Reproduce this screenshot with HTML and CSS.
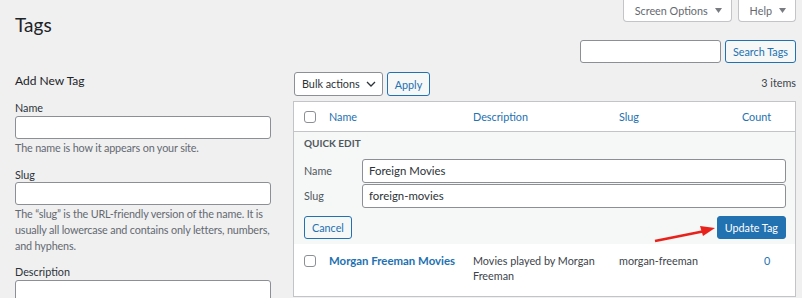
FILE: index.html
```html
<!DOCTYPE html>
<html lang="en">
<head>
    <meta charset="UTF-8">
    <title>Tags</title>
    <link rel="stylesheet" href="styles.css">
</head>
<body>
    <div class="top">
        <h1>Tags</h1>
        <div class="top-right">
            <div class="screen-links">
                <button class="meta-btn">Screen Options <svg width="7" height="5" viewBox="0 0 7 5"><path d="M0 0h7L3.5 5z" fill="#787c82"/></svg></button>
                <button class="meta-btn">Help <svg width="7" height="5" viewBox="0 0 7 5"><path d="M0 0h7L3.5 5z" fill="#787c82"/></svg></button>
            </div>
            <div class="search-box">
                <input type="text" class="search-input">
                <button class="btn">Search Tags</button>
            </div>
        </div>
    </div>

    <div class="columns">
        <div class="col-left">
            <h2>Add New Tag</h2>
            <div class="form-field">
                <label>Name</label>
                <input type="text" class="field">
                <p class="hint">The name is how it appears on your site.</p>
            </div>
            <div class="form-field">
                <label>Slug</label>
                <input type="text" class="field">
                <p class="hint">The &ldquo;slug&rdquo; is the URL-friendly version of the name. It is usually all lowercase and contains only letters, numbers, and hyphens.</p>
            </div>
            <div class="form-field">
                <label>Description</label>
                <textarea class="field area"></textarea>
            </div>
        </div>

        <div class="col-right">
            <div class="tablenav">
                <div class="select">Bulk actions <svg width="10" height="6" viewBox="0 0 10 6"><path d="M1 1l4 4 4-4" fill="none" stroke="#2c3338" stroke-width="1.3"/></svg></div>
                <button class="btn">Apply</button>
                <span class="count">3 items</span>
            </div>
            <div class="list">
                <div class="row head">
                    <span class="cell cb"><span class="check"></span></span>
                    <span class="cell">Name</span>
                    <span class="cell">Description</span>
                    <span class="cell">Slug</span>
                    <span class="cell num">Count</span>
                </div>
                <div class="quick-edit">
                    <div class="qe-title">Quick Edit</div>
                    <div class="qe-field">
                        <span class="qe-label">Name</span>
                        <input type="text" class="qe-input" value="Foreign Movies">
                    </div>
                    <div class="qe-field">
                        <span class="qe-label">Slug</span>
                        <input type="text" class="qe-input" value="foreign-movies">
                    </div>
                    <div class="qe-actions">
                        <button class="btn">Cancel</button>
                        <button class="btn primary">Update Tag</button>
                    </div>
                </div>
                <div class="row item">
                    <span class="cell cb"><span class="check"></span></span>
                    <span class="cell title">Morgan Freeman Movies</span>
                    <span class="cell">Movies played by Morgan Freeman</span>
                    <span class="cell">morgan-freeman</span>
                    <span class="cell num zero">0</span>
                </div>
                <svg class="arrow" width="70" height="20" viewBox="0 0 70 20">
                    <path d="M2 17L52 7" stroke="#e8211b" stroke-width="2.4" fill="none"/>
                    <path d="M47 2L62 4L50 12z" fill="#e8211b"/>
                </svg>
            </div>
        </div>
    </div>
</body>
</html>
```

FILE: styles.css
```css
body {
    margin: 0;
    padding: 0 6px 0 15px;
    background-color: #f0f0f1;
    font-family: Lato, "Open Sans", sans-serif;
    font-size: 10.8px;
    line-height: 1.45;
    color: #3c434a;
}
button, input, textarea {
    font-family: inherit;
    font-size: inherit;
    color: #2c3338;
}
.top {
    display: flex;
    justify-content: space-between;
}
h1 {
    margin: 13px 0 0;
    font-size: 19px;
    font-weight: 400;
    line-height: 1.3;
    color: #1d2327;
}
.top-right {
    display: flex;
    flex-direction: column;
    align-items: flex-end;
}
.screen-links {
    display: flex;
    gap: 6px;
}
.meta-btn {
    display: flex;
    align-items: center;
    gap: 7px;
    height: 22px;
    padding: 0 9px 0 11px;
    background-color: #fff;
    border: 1px solid #c3c4c7;
    border-top: none;
    border-radius: 0 0 4px 4px;
    color: #646970;
}
.search-box {
    display: flex;
    gap: 4px;
    margin-top: 18px;
}
.search-input {
    width: 141px;
    height: 23px;
    box-sizing: border-box;
    border: 1px solid #8c8f94;
    border-radius: 3px;
    background-color: #fff;
}
.btn {
    height: 23px;
    padding: 0 7px;
    box-sizing: border-box;
    background-color: #f6f7f7;
    border: 1px solid #2271b1;
    border-radius: 3px;
    color: #2271b1;
}
.btn.primary {
    background-color: #2271b1;
    color: #fff;
}
.columns {
    display: flex;
    margin-top: 4px;
}
.col-left {
    width: 256px;
    margin-right: 22px;
}
.col-left h2 {
    margin: 5px 0 11px;
    font-size: 12px;
    font-weight: 400;
    color: #1d2327;
}
.form-field {
    margin-bottom: 11px;
}
.form-field label {
    display: block;
    color: #2c3338;
}
.field {
    display: block;
    width: 100%;
    height: 23px;
    box-sizing: border-box;
    border: 1px solid #8c8f94;
    border-radius: 3px;
    background-color: #fff;
}
.area {
    height: 40px;
    resize: none;
}
.hint {
    margin: 1px 0 0;
    letter-spacing: -0.15px;
    color: #646970;
}
.col-right {
    flex: 1;
}
.tablenav {
    display: flex;
    align-items: center;
    gap: 4px;
    margin: 5px 0 5px 1px;
}
.select {
    display: flex;
    align-items: center;
    gap: 6px;
    height: 24px;
    padding: 0 6px 0 7px;
    box-sizing: border-box;
    background-color: #fff;
    border: 1px solid #8c8f94;
    border-radius: 3px;
    color: #2c3338;
}
.tablenav .btn {
    height: 24px;
    padding: 0 7px;
}
.count {
    margin-left: auto;
    color: #3c434a;
    align-self: flex-start;
    margin-top: 3px;
}
.list {
    position: relative;
    background-color: #fff;
    border: 1px solid #c3c4c7;
}
.row {
    display: grid;
    grid-template-columns: 35px 144px 146px 1fr 63px;
}
.head {
    height: 29px;
    align-items: center;
    border-bottom: 1px solid #c3c4c7;
    color: #2271b1;
}
.cell.cb {
    padding-left: 10px;
}
.check {
    display: block;
    width: 12px;
    height: 12px;
    box-sizing: border-box;
    border: 1px solid #8c8f94;
    border-radius: 3px;
    background-color: #fff;
}
.head .num {
    padding-left: 10px;
}
.quick-edit {
    background-color: #f6f7f7;
    padding: 4px 9px 5px 10px;
}
.qe-title {
    font-weight: 700;
    font-size: 10px;
    text-transform: uppercase;
    color: #50575e;
    margin-bottom: 8px;
}
.qe-field {
    display: flex;
    align-items: center;
    margin-bottom: 1px;
}
.qe-label {
    width: 58px;
    color: #50575e;
}
.qe-input {
    flex: 1;
    height: 24px;
    box-sizing: border-box;
    padding: 0 6px;
    border: 1px solid #8c8f94;
    border-radius: 3px;
    background-color: #fff;
    font-size: 11.4px;
}
.qe-actions {
    display: flex;
    justify-content: space-between;
    margin-top: 8px;
}
.item {
    padding: 9px 0 12px;
    min-height: 40px;
    box-sizing: border-box;
}
.item .check {
    margin-top: 2px;
}
.title {
    color: #2271b1;
    font-weight: 700;
    font-size: 11.4px;
}
.item .cell {
    padding-right: 12px;
}
.item .zero {
    padding-left: 32px;
    color: #2271b1;
}
.arrow {
    position: absolute;
    left: 359px;
    top: 122px;
}
```
